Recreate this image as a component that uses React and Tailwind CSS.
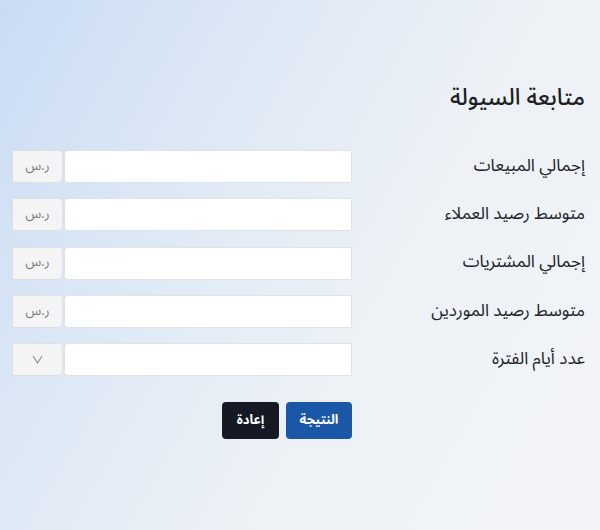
import React from "react";

const rows = [
  { label: "إجمالي المبيعات", addon: "ر.س" },
  { label: "متوسط رصيد العملاء", addon: "ر.س" },
  { label: "إجمالي المشتريات", addon: "ر.س" },
  { label: "متوسط رصيد الموردين", addon: "ر.س" },
  { label: "عدد أيام الفترة", addon: "V" },
];

export default function App() {
  return (
    <div
      dir="rtl"
      className="w-[600px] h-[530px] overflow-hidden bg-[linear-gradient(120deg,#c9dbf4_0%,#dde8f5_30%,#edf1f6_60%,#f2f4f7_100%)] text-[#1d1f24]"
      style={{ fontFamily: '"Noto Sans Arabic", "DejaVu Sans", "Noto Sans", sans-serif' }}
    >
      <div className="pt-[83px] pr-[15px] pl-[12px]">
        <h1 className="text-[23px] font-medium leading-[30px] text-[#1d1f24]">متابعة السيولة</h1>
        <div className="mt-[37px] flex flex-col gap-[15.25px]">
          {rows.map((r, i) => (
            <div key={i} className="flex items-center">
              <div className="flex-1 text-[17px] text-[#202328]">{r.label}</div>
              <div className="flex w-[340px] h-[33px] gap-px">
                <div className="flex-1 bg-white border border-[#dfe2e6] rounded-l-sm" />
                <div className="w-[51px] bg-[#f4f4f4] border border-[#dcdfe3] rounded-r-sm flex items-center justify-center text-[13px] text-[#7a7a7a]">
                  {r.addon === "V" ? (
                    <svg width="11" height="9" viewBox="0 0 11 9" fill="none" stroke="#8a8a8a" strokeWidth="1.1">
                      <path d="M1 1 L5.5 8 L10 1" />
                    </svg>
                  ) : (
                    r.addon
                  )}
                </div>
              </div>
            </div>
          ))}
        </div>
        <div className="mt-[26px] flex">
          <div className="flex-1" />
          <div className="w-[340px] flex gap-[7px]">
            <button className="w-[66px] h-[37px] rounded bg-[#1a57a6] text-white text-[13px] font-bold">النتيجة</button>
            <button className="w-[57px] h-[37px] rounded bg-[#151923] text-white text-[13px] font-bold">إعادة</button>
          </div>
        </div>
      </div>
    </div>
  );
}
